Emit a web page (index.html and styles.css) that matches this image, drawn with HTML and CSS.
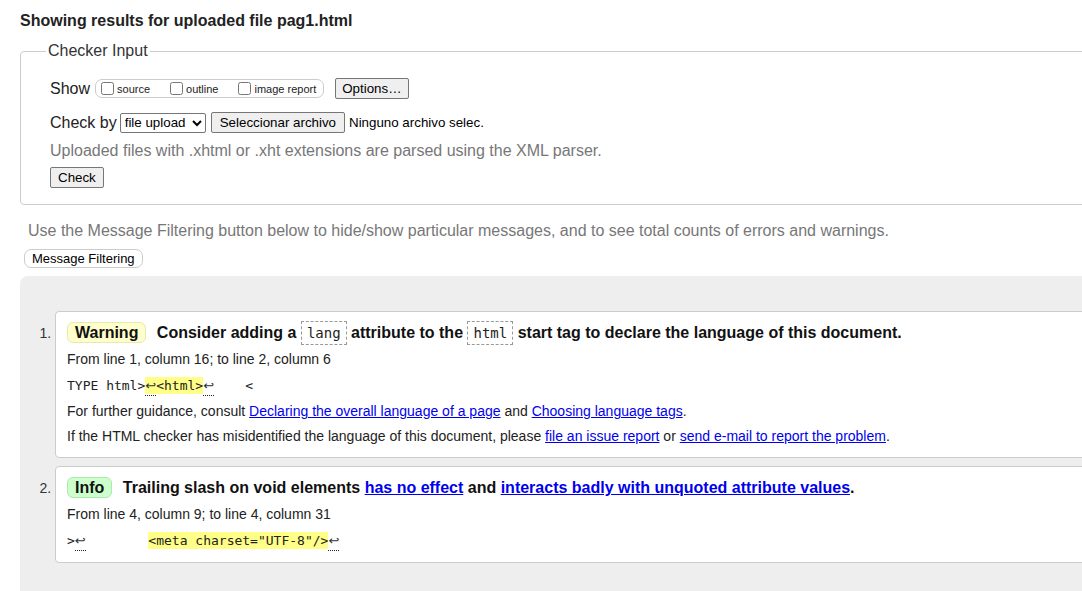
FILE: index.html
```html
<!DOCTYPE html>
<html lang="en">
<head>
<meta charset="utf-8">
<title>Nu Html Checker</title>
<link rel="stylesheet" href="styles.css">
</head>
<body>
<div class="page">
  <h2 class="heading">Showing results for uploaded file pag1.html</h2>
  <fieldset class="input">
    <legend>Checker Input</legend>
    <div class="row">
      <span class="label">Show</span>
      <span class="opts">
        <label class="opt"><input type="checkbox"><span>source</span></label>
        <label class="opt"><input type="checkbox"><span>outline</span></label>
        <label class="opt"><input type="checkbox"><span>image report</span></label>
      </span>
      <button class="btn btn-options">Options…</button>
    </div>
    <div class="row row-check">
      <span class="label">Check by</span>
      <select class="select"><option>file upload</option></select>
      <button class="btn btn-file">Seleccionar archivo</button>
      <span class="file-status">Ninguno archivo selec.</span>
    </div>
    <p class="hint">Uploaded files with .xhtml or .xht extensions are parsed using the XML parser.</p>
    <div class="row-submit"><button class="btn btn-check">Check</button></div>
  </fieldset>
  <p class="filter-hint">Use the Message Filtering button below to hide/show particular messages, and to see total counts of errors and warnings.</p>
  <button class="btn-filter">Message Filtering</button>
  <div class="results">
    <ol class="messages">
      <li class="msg">
        <p class="msg-title"><span class="badge badge-warning">Warning</span> Consider adding a <code class="term">lang</code> attribute to the <code class="term">html</code> start tag to declare the language of this document.</p>
        <p class="loc">From line 1, column 16; to line 2, column 6</p>
        <p class="extract"><code>TYPE html&gt;<b class="hl"><span class="lf">↩</span>&lt;html&gt;</b><span class="lf">↩</span>    &lt;</code></p>
        <p class="note">For further guidance, consult <a href="#">Declaring the overall language of a page</a> and <a href="#">Choosing language tags</a>.</p>
        <p class="note">If the HTML checker has misidentified the language of this document, please <a href="#">file an issue report</a> or <a href="#">send e-mail to report the problem</a>.</p>
      </li>
      <li class="msg">
        <p class="msg-title"><span class="badge badge-info">Info</span> Trailing slash on void elements <a href="#">has no effect</a> and <a href="#">interacts badly with unquoted attribute values</a>.</p>
        <p class="loc">From line 4, column 9; to line 4, column 31</p>
        <p class="extract"><code>&gt;<span class="lf">↩</span>        <b class="hl">&lt;meta charset="UTF-8"/&gt;</b><span class="lf">↩</span></code></p>
      </li>
    </ol>
  </div>
</div>
</body>
</html>
```

FILE: styles.css
```css
html, body {
  margin: 0;
  padding: 0;
  overflow: hidden;
  background: #fff;
}

body {
  font-family: "Liberation Sans", Arial, sans-serif;
  font-size: 16px;
  color: #222;
}

.page {
  width: 1120px;
  padding-left: 20px;
}

.heading {
  margin: 11px 0 0 0;
  font-size: 16px;
  line-height: 19px;
  font-weight: bold;
  color: #222;
}

.input {
  margin: 11px 0 0 0;
  padding: 17px 20px 16px 29px;
  border: 1px solid #ccc;
  border-radius: 4px;
  min-width: 0;
}

.input legend {
  padding: 0 2px;
  margin-left: -4px;
  font-size: 16px;
  line-height: 20px;
  color: #333;
}

.row {
  display: flex;
  align-items: center;
  height: 21px;
}

.row-check {
  margin-top: 13px;
}

.label {
  font-size: 16px;
  color: #222;
  margin-right: 5px;
}

.opts {
  display: inline-flex;
  align-items: center;
  gap: 16px;
  height: 19px;
  box-sizing: border-box;
  border: 1px solid #ccc;
  border-radius: 7px;
  padding: 0 7px 0 1px;
}

.opt {
  display: inline-flex;
  align-items: center;
  font-size: 11px;
  color: #222;
}

.opt input {
  width: 13px;
  height: 13px;
  margin: 0 3px 0 4px;
}

.btn {
  font-family: "Liberation Sans", Arial, sans-serif;
  font-size: 13.333px;
  color: #000;
  background: #efefef;
  border: 1px solid #767676;
  border-radius: 2px;
  height: 21px;
  padding: 0 6px;
  box-sizing: border-box;
}

.btn-options {
  margin-left: 11px;
}

.select {
  font-family: "Liberation Sans", Arial, sans-serif;
  font-size: 13.333px;
  color: #000;
  width: 86px;
  height: 20px;
  border: 1px solid #767676;
  border-radius: 2px;
  background: #fff;
  margin-left: -2px;
}

.btn-file {
  margin-left: 5px;
  padding: 0 8px;
}

.file-status {
  font-size: 13.333px;
  color: #000;
  margin-left: 4px;
}

.hint {
  margin: 8px 0 0 0;
  line-height: 20px;
  color: #777;
}

.row-submit {
  margin-top: 6px;
  display: flex;
}

.btn-check {
  padding: 0 7px;
}

.filter-hint {
  margin: 16px 0 0 8px;
  line-height: 20px;
  color: #777;
}

.btn-filter {
  display: block;
  margin: 8px 0 0 4px;
  height: 19px;
  padding: 0 7px;
  font-family: "Liberation Sans", Arial, sans-serif;
  font-size: 13px;
  color: #000;
  background: #fff;
  border: 1px solid #ccc;
  border-radius: 7px;
}

.results {
  margin-top: 8px;
  background: #eee;
  border-radius: 8px 0 0 0;
  padding: 35px 0 60px 35px;
}

.messages {
  margin: 0;
  padding: 0;
  list-style: decimal outside;
}

.msg {
  font-size: 14px;
  color: #222;
  background: #fff;
  border: 1px solid #ccc;
  border-radius: 4px;
  padding: 0 10px 11px 11px;
  margin-bottom: 8px;
}

.msg::marker {
  color: #333;
}

.msg p {
  margin: 5px 0 0 0;
  line-height: 20px;
}

.msg .msg-title {
  margin-top: 9px;
  font-size: 16px;
  font-weight: bold;
  line-height: 24px;
  color: #111;
}

.msg .loc {
  margin-top: 4px;
}

.msg .extract {
  margin-top: 6px;
}

.badge {
  display: inline-block;
  line-height: 19px;
  padding: 0 7px;
  border-radius: 6px;
  margin-right: 6px;
}

.badge-warning {
  background: #ffc;
  border: 1px solid #e8e8b0;
}

.badge-info {
  background: #cfc;
  border: 1px solid #ade8ad;
}

.term {
  display: inline-block;
  font-family: "DejaVu Sans Mono", monospace;
  font-weight: normal;
  font-size: 14px;
  line-height: 16px;
  padding: 3px 5px;
  border: 1px dashed #999;
  vertical-align: baseline;
  color: #222;
}

.extract code {
  font-family: "DejaVu Sans Mono", monospace;
  font-size: 13px;
  white-space: pre;
  color: #222;
}

.hl {
  font-weight: normal;
  background: #ff8;
  padding: 1px 0;
}

.lf {
  font-family: "DejaVu Sans", sans-serif;
  font-size: 13px;
  color: #333;
  border-bottom: 1px dotted #222;
  padding-bottom: 2px;
}

a {
  color: #00e;
  text-decoration: underline;
}

.msg-title a {
  color: #00e;
}
```
